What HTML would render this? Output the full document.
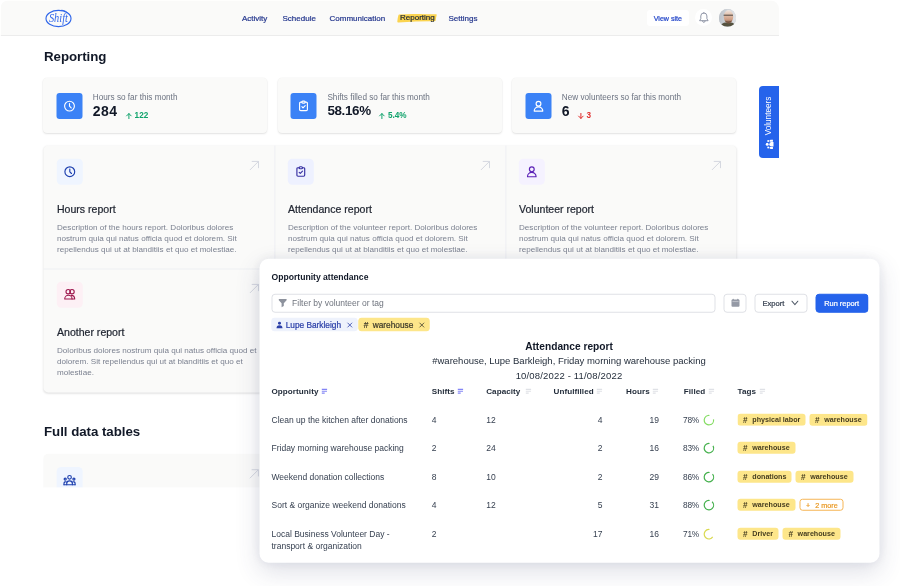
<!DOCTYPE html>
<html lang="en">
<head>
<meta charset="utf-8">
<title>Reporting</title>
<style>
*{box-sizing:border-box;margin:0;padding:0}
html,body{width:900px;height:586px;overflow:hidden;background:#fff}
body{font-family:"Liberation Sans",sans-serif;color:#111827;position:relative}
svg{display:block;overflow:visible}
.m{-webkit-text-stroke:.22px currentColor}
#page{will-change:transform;position:absolute;left:0;top:0;width:779px;height:488px;background:#fff;border-radius:9px 9px 0 0;overflow:hidden}
#nav{position:absolute;left:0;top:0;width:779px;height:36px;background:#fafaf9;border-bottom:1px solid #ececec}
.nl{position:absolute;top:13.5px;font-size:8px;color:#27398f;line-height:10px;white-space:nowrap}
#hl{position:absolute;left:398px;top:14.2px;width:39px;height:8.2px;background:#fbd34f;border-radius:2px 3px 2px 3px;transform:skewX(-14deg) rotate(-.6deg)}
#viewsite{position:absolute;left:647px;top:9.7px;width:41.7px;height:16.6px;background:#fff;border-radius:3px;font-size:7.1px;line-height:18.2px;text-align:center;color:#2447c9;white-space:nowrap}
#bell{position:absolute;left:694.8px;top:8.9px;width:17.6px;height:17.6px;border-radius:50%;background:#fff}
#ava{position:absolute;left:718.8px;top:9.2px;width:17.4px;height:17.4px;border-radius:50%;overflow:hidden;background:#c4c7cc}
h1,h2{position:absolute;font-weight:700;font-size:13.3px;letter-spacing:-.04px;line-height:16px;color:#111827;white-space:nowrap}
.stat{position:absolute;top:78px;width:224px;height:54.7px;background:#fafaf9;border-radius:4px;box-shadow:0 1px 2px rgba(0,0,0,.10),0 0 0 .5px rgba(0,0,0,.03)}
.stat .ic{position:absolute;left:14px;top:15px;transform:translate(-.5px,.1px);width:26px;height:26px;background:#3b82f6;border-radius:3px}
.stat .lb{position:absolute;left:49.8px;top:15px;transform:translateY(.2px);font-size:8.2px;line-height:10px;color:#6b7280;white-space:nowrap}
.stat .num{position:absolute;left:49.8px;top:25.4px;font-size:14px;line-height:16px;font-weight:700;letter-spacing:.4px;color:#111827;white-space:nowrap}
.stat .dl{position:absolute;top:33px;font-size:8.2px;line-height:10px;font-weight:700;white-space:nowrap}
.stat .dl svg{position:absolute;left:-8.8px;top:1.6px;width:5.8px;height:6px}
.up{color:#10a36c}.down{color:#e02d2d}
#grid{position:absolute;left:43px;top:145px;transform:translate(.4px,.5px);width:693px;height:247px;background:#fafaf9;border-radius:5px;box-shadow:0 1px 2px rgba(0,0,0,.10)}
.cell{position:absolute;width:231px;height:123px}
.ib{position:absolute;left:13px;top:13px;transform:translate(.4px,.2px);width:26.2px;height:26.2px;border-radius:4.5px}
.ic svg,.ib svg{position:absolute;left:6px;top:6px;width:14px;height:14px}
.cell .t{position:absolute;left:13.6px;top:56.7px;font-size:10.55px;line-height:13px;color:#1f2430;white-space:nowrap}
.cell .d{position:absolute;left:13.6px;top:75.7px;font-size:8.1px;line-height:11px;color:#7b8190;white-space:nowrap}
.arr{position:absolute;right:15px;top:14.5px;width:10px;height:10px}
.vd{position:absolute;top:0;width:1px;height:247px;background:#eeeff3}
.hd{position:absolute;left:0;top:122.5px;width:692px;height:1px;background:#eeeff3}
#vtab{position:absolute;left:759px;top:86px;width:21px;height:72px;background:#2563eb;border-radius:4px 0 0 4px}
#vtab span{position:absolute;left:-20.2px;top:23.5px;width:60px;height:12px;line-height:12px;font-size:8.2px;color:#fff;transform:rotate(-90deg);text-align:center;white-space:nowrap}
#card2{position:absolute;left:43px;top:454px;transform:translate(.3px,-.2px);width:693px;height:60px;background:#fafaf9;border-radius:5px}
#panel{will-change:transform;position:absolute;left:260px;top:259px;transform:translate(-.5px,-.25px);width:620px;height:304px;background:#fff;border-radius:9px;box-shadow:0 9px 24px rgba(55,65,105,.16),0 0 12px rgba(55,65,105,.075)}
#panel .ttl{position:absolute;left:12px;top:12px;font-size:8.6px;line-height:12px;font-weight:700;color:#111827;white-space:nowrap}
.inp{position:absolute;top:34.6px;height:19px;border:1px solid #dfe1e6;border-radius:3.5px;background:#fff}
.chip{position:absolute;top:59px;height:13.4px;border-radius:3px;font-size:8.3px;line-height:14.4px;white-space:nowrap}
.ctr{position:absolute;left:0;width:619px;text-align:center;white-space:nowrap}
.th{position:absolute;top:128px;transform:translateY(-.1px);font-size:8.1px;letter-spacing:.06px;line-height:10px;font-weight:700;color:#1f2937;white-space:nowrap}
.td{position:absolute;font-size:8.5px;line-height:12px;color:#374151;white-space:nowrap}
.tg{position:absolute;height:12px;border-radius:3px;background:#fde68a;color:#453c1f;font-size:7px;font-weight:700;line-height:13px;white-space:nowrap}
.so{position:absolute;top:3px;width:5.6px;height:5px}
</style>
</head>
<body>
<div id="page">
<div id="nav">
<svg style="position:absolute;left:44.5px;top:8.5px;width:27px;height:19px" viewBox="0 0 27 19"><ellipse cx="13.5" cy="9.5" rx="12.5" ry="8.15" fill="none" stroke="#2f66ea" stroke-width="1.15"/><path d="M16.5 1.1 Q20.5 1.6 22.6 3.6" fill="none" stroke="#2f66ea" stroke-width=".8"/><text x="13.4" y="13.2" text-anchor="middle" textLength="19" lengthAdjust="spacingAndGlyphs" style="font-family:'Liberation Serif',serif;font-style:italic;font-size:11.5px" fill="#2f66ea">Shift</text></svg>
<span class="nl m" style="left:242px">Activity</span>
<span class="nl m" style="left:282.5px">Schedule</span>
<span class="nl m" style="left:329.5px">Communication</span>
<svg style="position:absolute;left:396px;top:13px;width:42px;height:11px" viewBox="0 0 42 11"><path d="M3.2 1.5 Q12 .9 22 1.1 T40.3 1.3 Q41 1.4 40.6 2.6 Q39.9 5 39.7 7.6 Q39.6 8.3 38.6 8.3 Q22 8.2 2.4 9.4 Q1.2 9.5 1.3 8.4 Q1.6 5 2.4 2.2 Q2.6 1.5 3.2 1.5z" fill="#fbd44f"/></svg>
<span class="nl m" style="left:400px;top:12.5px;color:#1f2937">Reporting</span>
<span class="nl m" style="left:448.5px">Settings</span>
<div id="viewsite" class="m">View site</div>
<div id="bell"><svg style="position:absolute;left:0;top:0;width:17.6px;height:17.6px" viewBox="0 0 17.6 17.6" fill="none" stroke="#8b91a3" stroke-width=".95" stroke-linecap="round" stroke-linejoin="round"><path d="M8.85 3.9 a3.05 3.05 0 0 0 -3.05 3.05 V9.7 L4.6 11.7 H13.1 L11.9 9.7 V6.95 a3.05 3.05 0 0 0 -3.05 -3.05z"/><path d="M7.5 12 a1.4 1.9 0 0 0 2.7 0"/></svg></div>
<div id="ava"><svg viewBox="0 0 17.4 17.4" style="width:17.4px;height:17.4px"><defs><linearGradient id="abg" x1="0" x2="1" y1="0" y2="0"><stop offset="0" stop-color="#bcc2c9"/><stop offset="1" stop-color="#e4e6e9"/></linearGradient><linearGradient id="ahd" x1="0" x2="0" y1="0" y2="1"><stop offset="0" stop-color="#efe6e1"/><stop offset=".35" stop-color="#e2c2ae"/><stop offset=".7" stop-color="#cf9f86"/><stop offset="1" stop-color="#7d5a45"/></linearGradient></defs><rect width="17.4" height="17.4" fill="url(#abg)"/><path d="M1.5 17.4 Q3 13.6 6.5 13.4 L12 13.4 Q15.2 13.6 16.4 17.4z" fill="#55523f"/><ellipse cx="9.5" cy="7.7" rx="4.7" ry="6.7" fill="url(#ahd)"/><path d="M4.6 6.2 H14" stroke="#35312e" stroke-width="1" opacity=".85"/><path d="M5.6 11.4 Q9.4 16 13.2 11.4 Q9.4 13.4 5.6 11.4z" fill="#5e4334" opacity=".8"/></svg></div>
</div>
<h1 style="left:44px;top:49px">Reporting</h1>
<div class="stat" style="left:43px"><div class="ic" style="left:14px"><svg viewBox="0 0 14 14" fill="none" stroke="#fff" stroke-width="1.15" stroke-linecap="round" stroke-linejoin="round"><circle cx="7" cy="7" r="4.9"/><path d="M7 4.4 V7.1 L8.7 8.8"/></svg></div><div class="lb">Hours so far this month</div><div class="num" style="">284</div><div class="dl up" style="left:91.6px"><svg viewBox="0 0 5.8 6" fill="none" stroke="currentColor" stroke-width="1" stroke-linecap="round" stroke-linejoin="round"><path d="M2.9 5.6V.6M.6 2.9L2.9 .6L5.2 2.9"/></svg>122</div></div>
<div class="stat" style="left:277.6px"><div class="ic" style="left:13.3px"><svg viewBox="0 0 14 14" fill="none" stroke="#fff" stroke-width="1.15" stroke-linecap="round" stroke-linejoin="round"><path d="M5.3 3 H4.2 a1.1 1.1 0 0 0 -1.1 1.1 V10.4 a1.1 1.1 0 0 0 1.1 1.1 H9.8 a1.1 1.1 0 0 0 1.1 -1.1 V4.1 A1.1 1.1 0 0 0 9.8 3 H8.7"/><path d="M5.3 3 a1 1 0 0 1 1 -1 h1.4 a1 1 0 0 1 0 2 h-1.4 a1 1 0 0 1 -1 -1z"/><path d="M5.4 7.6 L6.5 8.7 L8.7 6.5"/></svg></div><div class="lb">Shifts filled so far this month</div><div class="num" style="font-size:13.4px;letter-spacing:-.35px">58.16%</div><div class="dl up" style="left:110.4px"><svg viewBox="0 0 5.8 6" fill="none" stroke="currentColor" stroke-width="1" stroke-linecap="round" stroke-linejoin="round"><path d="M2.9 5.6V.6M.6 2.9L2.9 .6L5.2 2.9"/></svg>5.4%</div></div>
<div class="stat" style="left:512px"><div class="ic" style="left:13.5px"><svg viewBox="0 0 14 14" fill="none" stroke="#fff" stroke-width="1.15" stroke-linecap="round" stroke-linejoin="round"><circle cx="7" cy="4.6" r="2.4"/><path d="M2.7 12 a4.3 4.3 0 0 1 8.6 0 z"/></svg></div><div class="lb">New volunteers so far this month</div><div class="num" style="">6</div><div class="dl down" style="left:74.6px"><svg viewBox="0 0 5.8 6" fill="none" stroke="currentColor" stroke-width="1" stroke-linecap="round" stroke-linejoin="round"><path d="M2.9 .4V5.4M.6 3.1L2.9 5.4L5.2 3.1"/></svg>3</div></div>
<div id="grid">
<div class="vd" style="left:230.5px"></div><div class="vd" style="left:461.5px"></div><div class="hd"></div>
<div class="cell" style="left:0px;top:0px"><div class="ib" style="background:#eff5ff"><svg viewBox="0 0 14 14" fill="none" stroke="#1e40af" stroke-width="1.15" stroke-linecap="round" stroke-linejoin="round"><circle cx="7" cy="7" r="4.9"/><path d="M7 4.4 V7.1 L8.7 8.8"/></svg></div><svg class="arr" viewBox="0 0 11 11" fill="none" stroke="#d1d4dd" stroke-width="1" stroke-linecap="butt"><path d="M0.6 10.4 L10 1 M2.6 1 H10 V8.4"/></svg><div class="t m">Hours report</div><div class="d">Description of the hours report. Doloribus dolores<br>nostrum quia qui natus officia quod et dolorem. Sit<br>repellendus qui ut at blanditiis et quo et molestiae.</div></div>
<div class="cell" style="left:231px;top:0px"><div class="ib" style="background:#eef1ff"><svg viewBox="0 0 14 14" fill="none" stroke="#3730a3" stroke-width="1.15" stroke-linecap="round" stroke-linejoin="round"><path d="M5.3 3 H4.2 a1.1 1.1 0 0 0 -1.1 1.1 V10.4 a1.1 1.1 0 0 0 1.1 1.1 H9.8 a1.1 1.1 0 0 0 1.1 -1.1 V4.1 A1.1 1.1 0 0 0 9.8 3 H8.7"/><path d="M5.3 3 a1 1 0 0 1 1 -1 h1.4 a1 1 0 0 1 0 2 h-1.4 a1 1 0 0 1 -1 -1z"/><path d="M5.4 7.6 L6.5 8.7 L8.7 6.5"/></svg></div><svg class="arr" viewBox="0 0 11 11" fill="none" stroke="#d1d4dd" stroke-width="1" stroke-linecap="butt"><path d="M0.6 10.4 L10 1 M2.6 1 H10 V8.4"/></svg><div class="t m">Attendance report</div><div class="d">Description of the volunteer report. Doloribus dolores<br>nostrum quia qui natus officia quod et dolorem. Sit<br>repellendus qui ut at blanditiis et quo et molestiae.</div></div>
<div class="cell" style="left:462px;top:0px"><div class="ib" style="background:#f5f2ff"><svg viewBox="0 0 14 14" fill="none" stroke="#5b21b6" stroke-width="1.15" stroke-linecap="round" stroke-linejoin="round"><circle cx="7" cy="4.6" r="2.4"/><path d="M2.7 12 a4.3 4.3 0 0 1 8.6 0 z"/></svg></div><svg class="arr" viewBox="0 0 11 11" fill="none" stroke="#d1d4dd" stroke-width="1" stroke-linecap="butt"><path d="M0.6 10.4 L10 1 M2.6 1 H10 V8.4"/></svg><div class="t m">Volunteer report</div><div class="d">Description of the volunteer report. Doloribus dolores<br>nostrum quia qui natus officia quod et dolorem. Sit<br>repellendus qui ut at blanditiis et quo et molestiae.</div></div>
<div class="cell" style="left:0px;top:123px"><div class="ib" style="background:#fdf0f5"><svg viewBox="0 0 14 14" fill="none" stroke="#9d174d" stroke-width="1.1" stroke-linecap="round" stroke-linejoin="round"><circle cx="5.4" cy="4" r="2.2"/><circle cx="9.2" cy="4" r="2.2"/><path d="M1.9 11.3 a3.7 3.7 0 0 1 7.4 0 z"/><path d="M9.3 11.3 H11.9 a3.6 3.6 0 0 0 -3.5 -3.6"/></svg></div><svg class="arr" viewBox="0 0 11 11" fill="none" stroke="#d1d4dd" stroke-width="1" stroke-linecap="butt"><path d="M0.6 10.4 L10 1 M2.6 1 H10 V8.4"/></svg><div class="t m">Another report</div><div class="d">Doloribus dolores nostrum quia qui natus officia quod et<br>dolorem. Sit repellendus qui ut at blanditiis et quo et<br>molestiae.</div></div>
</div>
<h2 style="left:44px;top:424px">Full data tables</h2>
<div id="card2"><div class="ib" style="background:#eff5ff"><svg viewBox="0 0 14 14" fill="none" stroke="#1e40af" stroke-width="1.15" stroke-linecap="round" stroke-linejoin="round"><circle cx="6.85" cy="4.3" r="1.8"/><circle cx="2.5" cy="6.1" r="1.05"/><circle cx="11.2" cy="6.1" r="1.05"/><path d="M1.3 11.7 H12.4"/><path d="M4 11.7 V10.7 a2.85 2.85 0 0 1 5.7 0 V11.7"/><path d="M1.3 11.7 V10.4 a1.6 1.6 0 0 1 2.7 -1.2"/><path d="M12.4 11.7 V10.4 a1.6 1.6 0 0 0 -2.7 -1.2"/></svg></div><svg class="arr" style="right:auto;left:205.5px" viewBox="0 0 11 11" fill="none" stroke="#d1d4dd" stroke-width="1" stroke-linecap="butt"><path d="M0.6 10.4 L10 1 M2.6 1 H10 V8.4"/></svg></div>
<div id="vtab"><span>Volunteers</span><svg style="position:absolute;left:5.8px;top:54.3px;width:9.2px;height:8.6px;transform:rotate(-90deg)" viewBox="0 0 9 9" preserveAspectRatio="none" fill="#fff"><circle cx="4.5" cy="2" r="1.5"/><circle cx="1.3" cy="3" r="1"/><circle cx="7.7" cy="3" r="1"/><path d="M2.3 8.6 V6.4 a2.2 2.2 0 0 1 4.4 0 V8.6z"/><path d="M0 8 V5.6 a1.3 1.3 0 0 1 1.9 -1 V8z"/><path d="M9 8 V5.6 a1.3 1.3 0 0 0 -1.9 -1 V8z"/></svg></div>
<div style="position:absolute;left:0;top:487px;width:779px;height:1px;background:rgba(255,255,255,.6)"></div>
</div>
<div style="position:absolute;left:0;top:0;width:1px;height:488px;background:rgba(255,255,255,.85)"></div><div style="position:absolute;left:0;top:0;width:779px;height:1px;background:rgba(255,255,255,.7)"></div>
<div id="panel">
<div class="ttl">Opportunity attendance</div>
<div class="inp" style="left:11.6px;width:444.4px"><svg style="position:absolute;left:6.5px;top:4.8px;width:8.4px;height:8.4px" viewBox="0 0 8.4 8.4" fill="#8d929d"><path d="M.3 .2 H8.1 V1.6 L5.3 4.6 V7.2 L3.1 8.4 V4.6 L.3 1.6z"/></svg><span style="position:absolute;left:20px;top:3.6px;font-size:8.5px;line-height:11px;color:#6f747e;white-space:nowrap">Filter by volunteer or tag</span></div>
<div class="inp" style="left:464px;width:23px"><svg style="position:absolute;left:7px;top:4.6px;width:8px;height:8px" viewBox="0 0 8 8" fill="#9499a5"><rect x="1.2" y="0" width="1.1" height="2" rx=".4"/><rect x="5.7" y="0" width="1.1" height="2" rx=".4"/><rect x="0" y=".8" width="8" height="7.2" rx="1"/><rect x=".9" y="2.6" width="6.2" height=".7" fill="#fff" opacity=".55"/></svg></div>
<div class="inp" style="left:495px;width:53px"><span class="m" style="position:absolute;left:7px;top:4.6px;font-size:7.6px;line-height:10px;color:#374151">Export</span><svg style="position:absolute;left:36.2px;top:6.9px;width:6.8px;height:4.6px" viewBox="0 0 6.8 4" preserveAspectRatio="none" fill="none" stroke="#4b5563" stroke-width=".9" stroke-linecap="round" stroke-linejoin="round"><path d="M.4 .4 L3.4 3.4 L6.4 .4"/></svg></div>
<div class="inp m" style="left:555.7px;width:53px;background:#2563eb;border-color:#2563eb;color:#fff;font-size:7.4px;line-height:18px;text-align:center">Run report</div>
<div class="chip" style="left:12.2px;width:85.6px;background:#eef2fc;box-shadow:0 .5px 0 #eef2fc;color:#2b3fa8"><svg style="position:absolute;left:5px;top:3.6px;width:6px;height:6.4px" viewBox="0 0 6 6.4" fill="#2b3fa8"><circle cx="3" cy="1.5" r="1.5"/><path d="M0 6.4 a3 3 0 0 1 6 0z"/></svg><span class="m" style="position:absolute;left:14px">Lupe Barkleigh</span><svg style="position:absolute;left:75.6px;top:4.9px;width:4.6px;height:4.6px" viewBox="0 0 4.6 4.6" stroke="#2b3fa8" stroke-width=".8" fill="none"><path d="M0 0L4.6 4.6M4.6 0L0 4.6"/></svg></div>
<div class="chip" style="left:99.2px;width:71px;background:#fde68a;box-shadow:0 .5px 0 #fde68a;color:#3d3a2a"><span class="m" style="position:absolute;left:5px">#</span><span class="m" style="position:absolute;left:14px">warehouse</span><svg style="position:absolute;left:61px;top:4.9px;width:4.6px;height:4.6px" viewBox="0 0 4.6 4.6" stroke="#3d3a2a" stroke-width=".8" fill="none"><path d="M0 0L4.6 4.6M4.6 0L0 4.6"/></svg></div>
<div class="ctr" style="top:81px;font-size:10.2px;line-height:13px;font-weight:700;color:#111827">Attendance report</div>
<div class="ctr" style="top:95px;font-size:9.5px;line-height:13px;color:#1f2937">#warehouse, Lupe Barkleigh, Friday morning warehouse packing</div>
<div class="ctr" style="top:110px;font-size:9.5px;letter-spacing:.17px;line-height:13px;color:#1f2937">10/08/2022 - 11/08/2022</div>
<div class="th" style="left:12px">Opportunity</div><svg class="so" style="left:62px;top:130px" viewBox="0 0 5.6 5" fill="none" stroke="#8385f5" stroke-width="1.1"><path d="M.3 .6H5.6M.3 2.5H5.5M.3 4.4H3.2"/></svg>
<div class="th" style="left:172.3px">Shifts</div><svg class="so" style="left:198.3px;top:130px" viewBox="0 0 5.6 5" fill="none" stroke="#8385f5" stroke-width="1.1"><path d="M.3 .6H5.6M.3 2.5H5.5M.3 4.4H3.2"/></svg>
<div class="th" style="left:226.7px">Capacity</div><svg class="so" style="left:265.7px;top:130px" viewBox="0 0 5.6 5" fill="none" stroke="#dfe1e6" stroke-width="1.1"><path d="M.3 .6H5.6M.3 2.5H5.5M.3 4.4H3.2"/></svg>
<div class="th" style="left:294px">Unfulfilled</div><svg class="so" style="left:337.4px;top:130px" viewBox="0 0 5.6 5" fill="none" stroke="#dfe1e6" stroke-width="1.1"><path d="M.3 .6H5.6M.3 2.5H5.5M.3 4.4H3.2"/></svg>
<div class="th" style="left:366.6px">Hours</div><svg class="so" style="left:393.4px;top:130px" viewBox="0 0 5.6 5" fill="none" stroke="#dfe1e6" stroke-width="1.1"><path d="M.3 .6H5.6M.3 2.5H5.5M.3 4.4H3.2"/></svg>
<div class="th" style="left:424.3px">Filled</div><svg class="so" style="left:449px;top:130px" viewBox="0 0 5.6 5" fill="none" stroke="#dfe1e6" stroke-width="1.1"><path d="M.3 .6H5.6M.3 2.5H5.5M.3 4.4H3.2"/></svg>
<div class="th" style="left:478px">Tags</div><svg class="so" style="left:500px;top:130px" viewBox="0 0 5.6 5" fill="none" stroke="#dfe1e6" stroke-width="1.1"><path d="M.3 .6H5.6M.3 2.5H5.5M.3 4.4H3.2"/></svg>
<div class="td" style="left:12px;top:155px">Clean up the kitchen after donations</div><div class="td" style="left:172.3px;top:155px">4</div><div class="td" style="left:226.7px;top:155px">12</div><div class="td" style="left:303px;width:40px;text-align:right;top:155px">4</div><div class="td" style="left:359.5px;width:40px;text-align:right;top:155px">19</div><div class="td" style="left:399.3px;width:40px;text-align:right;top:155px;font-size:8.3px;letter-spacing:-.3px">78%</div><svg style="position:absolute;left:443.7px;top:155.8px;width:10.8px;height:10.8px" viewBox="0 0 10.8 10.8" fill="none"><circle cx="5.4" cy="5.4" r="4.7" stroke="#82dc60" stroke-width="1.2" stroke-dasharray="23.03 29.53" transform="rotate(-10.8 5.4 5.4)"/></svg><div class="tg" style="left:478px;top:154.8px;width:67.8px"><span style="position:absolute;left:5.6px;font-size:8.2px">#</span><span style="position:absolute;left:14.8px;font-size:7.15px">physical labor</span></div><div class="tg" style="left:550.0px;top:154.8px;width:58px"><span style="position:absolute;left:5.6px;font-size:8.2px">#</span><span style="position:absolute;left:14.8px;font-size:7.15px">warehouse</span></div>
<div class="td" style="left:12px;top:183px">Friday morning warehouse packing</div><div class="td" style="left:172.3px;top:183px">2</div><div class="td" style="left:226.7px;top:183px">24</div><div class="td" style="left:303px;width:40px;text-align:right;top:183px">2</div><div class="td" style="left:359.5px;width:40px;text-align:right;top:183px">16</div><div class="td" style="left:399.3px;width:40px;text-align:right;top:183px;font-size:8.3px;letter-spacing:-.3px">83%</div><svg style="position:absolute;left:443.7px;top:183.8px;width:10.8px;height:10.8px" viewBox="0 0 10.8 10.8" fill="none"><circle cx="5.4" cy="5.4" r="4.7" stroke="#44b04c" stroke-width="1.2" stroke-dasharray="24.51 29.53" transform="rotate(-28.8 5.4 5.4)"/></svg><div class="tg" style="left:478px;top:182.8px;width:58px"><span style="position:absolute;left:5.6px;font-size:8.2px">#</span><span style="position:absolute;left:14.8px;font-size:7.15px">warehouse</span></div>
<div class="td" style="left:12px;top:212px">Weekend donation collections</div><div class="td" style="left:172.3px;top:212px">8</div><div class="td" style="left:226.7px;top:212px">10</div><div class="td" style="left:303px;width:40px;text-align:right;top:212px">2</div><div class="td" style="left:359.5px;width:40px;text-align:right;top:212px">29</div><div class="td" style="left:399.3px;width:40px;text-align:right;top:212px;font-size:8.3px;letter-spacing:-.3px">86%</div><svg style="position:absolute;left:443.7px;top:212.8px;width:10.8px;height:10.8px" viewBox="0 0 10.8 10.8" fill="none"><circle cx="5.4" cy="5.4" r="4.7" stroke="#44b04c" stroke-width="1.2" stroke-dasharray="25.40 29.53" transform="rotate(-39.6 5.4 5.4)"/></svg><div class="tg" style="left:478px;top:211.8px;width:53.8px"><span style="position:absolute;left:5.6px;font-size:8.2px">#</span><span style="position:absolute;left:14.8px;font-size:7.15px">donations</span></div><div class="tg" style="left:536.0px;top:211.8px;width:58px"><span style="position:absolute;left:5.6px;font-size:8.2px">#</span><span style="position:absolute;left:14.8px;font-size:7.15px">warehouse</span></div>
<div class="td" style="left:12px;top:240px">Sort &amp; organize weekend donations</div><div class="td" style="left:172.3px;top:240px">4</div><div class="td" style="left:226.7px;top:240px">12</div><div class="td" style="left:303px;width:40px;text-align:right;top:240px">5</div><div class="td" style="left:359.5px;width:40px;text-align:right;top:240px">31</div><div class="td" style="left:399.3px;width:40px;text-align:right;top:240px;font-size:8.3px;letter-spacing:-.3px">88%</div><svg style="position:absolute;left:443.7px;top:240.8px;width:10.8px;height:10.8px" viewBox="0 0 10.8 10.8" fill="none"><circle cx="5.4" cy="5.4" r="4.7" stroke="#44b04c" stroke-width="1.2" stroke-dasharray="25.99 29.53" transform="rotate(-46.8 5.4 5.4)"/></svg><div class="tg" style="left:478px;top:239.8px;width:58px"><span style="position:absolute;left:5.6px;font-size:8.2px">#</span><span style="position:absolute;left:14.8px;font-size:7.15px">warehouse</span></div><div class="tg" style="left:540.2px;top:239.8px;width:44px;background:#fff;border:1px solid #f6b555;color:#e9961d;line-height:11px;font-weight:400;-webkit-text-stroke:.2px #e9961d"><span style="position:absolute;left:5.4px">+</span><span style="position:absolute;left:14.6px;font-size:7.2px">2 more</span></div>
<div class="td" style="left:12px;top:269px">Local Business Volunteer Day -<br>transport &amp; organization</div><div class="td" style="left:172.3px;top:269px">2</div><div class="td" style="left:303px;width:40px;text-align:right;top:269px">17</div><div class="td" style="left:359.5px;width:40px;text-align:right;top:269px">16</div><div class="td" style="left:399.3px;width:40px;text-align:right;top:269px;font-size:8.3px;letter-spacing:-.3px">71%</div><svg style="position:absolute;left:443.7px;top:269.8px;width:10.8px;height:10.8px" viewBox="0 0 10.8 10.8" fill="none"><circle cx="5.4" cy="5.4" r="4.7" stroke="#d9d94e" stroke-width="1.2" stroke-dasharray="19.20 29.53" transform="rotate(36.0 5.4 5.4)"/></svg><div class="tg" style="left:478px;top:268.8px;width:41.1px"><span style="position:absolute;left:5.6px;font-size:8.2px">#</span><span style="position:absolute;left:14.8px;font-size:7.15px">Driver</span></div><div class="tg" style="left:523.3px;top:268.8px;width:58px"><span style="position:absolute;left:5.6px;font-size:8.2px">#</span><span style="position:absolute;left:14.8px;font-size:7.15px">warehouse</span></div>
</div>
</body>
</html>
